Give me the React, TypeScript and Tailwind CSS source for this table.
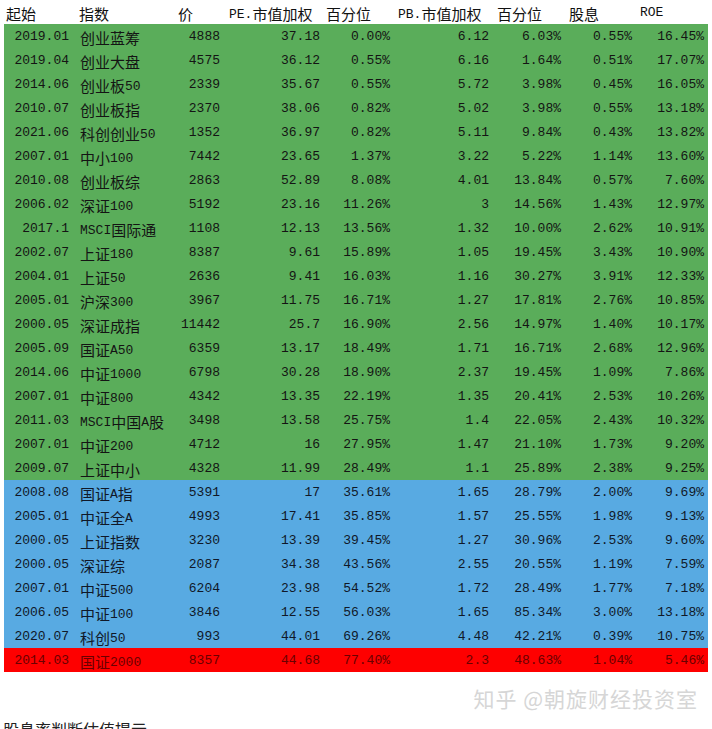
import React from "react";

type Row = { c: string[]; k: "g" | "b" | "r" };

const raw: [string, string][] = [
  ["2019.01|创业蓝筹|4888|37.18|0.00%|6.12|6.03%|0.55%|16.45%", "g"],
  ["2019.04|创业大盘|4575|36.12|0.55%|6.16|1.64%|0.51%|17.07%", "g"],
  ["2014.06|创业板50|2339|35.67|0.55%|5.72|3.98%|0.45%|16.05%", "g"],
  ["2010.07|创业板指|2370|38.06|0.82%|5.02|3.98%|0.55%|13.18%", "g"],
  ["2021.06|科创创业50|1352|36.97|0.82%|5.11|9.84%|0.43%|13.82%", "g"],
  ["2007.01|中小100|7442|23.65|1.37%|3.22|5.22%|1.14%|13.60%", "g"],
  ["2010.08|创业板综|2863|52.89|8.08%|4.01|13.84%|0.57%|7.60%", "g"],
  ["2006.02|深证100|5192|23.16|11.26%|3|14.56%|1.43%|12.97%", "g"],
  ["2017.1|MSCI国际通|1108|12.13|13.56%|1.32|10.00%|2.62%|10.91%", "g"],
  ["2002.07|上证180|8387|9.61|15.89%|1.05|19.45%|3.43%|10.90%", "g"],
  ["2004.01|上证50|2636|9.41|16.03%|1.16|30.27%|3.91%|12.33%", "g"],
  ["2005.01|沪深300|3967|11.75|16.71%|1.27|17.81%|2.76%|10.85%", "g"],
  ["2000.05|深证成指|11442|25.7|16.90%|2.56|14.97%|1.40%|10.17%", "g"],
  ["2005.09|国证A50|6359|13.17|18.49%|1.71|16.71%|2.68%|12.96%", "g"],
  ["2014.06|中证1000|6798|30.28|18.90%|2.37|19.45%|1.09%|7.86%", "g"],
  ["2007.01|中证800|4342|13.35|22.19%|1.35|20.41%|2.53%|10.26%", "g"],
  ["2011.03|MSCI中国A股|3498|13.58|25.75%|1.4|22.05%|2.43%|10.32%", "g"],
  ["2007.01|中证200|4712|16|27.95%|1.47|21.10%|1.73%|9.20%", "g"],
  ["2009.07|上证中小|4328|11.99|28.49%|1.1|25.89%|2.38%|9.25%", "g"],
  ["2008.08|国证A指|5391|17|35.61%|1.65|28.79%|2.00%|9.69%", "b"],
  ["2005.01|中证全A|4993|17.41|35.85%|1.57|25.55%|1.98%|9.13%", "b"],
  ["2000.05|上证指数|3230|13.39|39.45%|1.27|30.96%|2.53%|9.60%", "b"],
  ["2000.05|深证综|2087|34.38|43.56%|2.55|20.55%|1.19%|7.59%", "b"],
  ["2007.01|中证500|6204|23.98|54.52%|1.72|28.49%|1.77%|7.18%", "b"],
  ["2006.05|中证100|3846|12.55|56.03%|1.65|85.34%|3.00%|13.18%", "b"],
  ["2020.07|科创50|993|44.01|69.26%|4.48|42.21%|0.39%|10.75%", "b"],
  ["2014.03|国证2000|8357|44.68|77.40%|2.3|48.63%|1.04%|5.46%", "r"],
];

const rows: Row[] = raw.map(([s, k]) => ({ c: s.split("|"), k: k as Row["k"] }));

const headers = ["起始", "指数", "价", "PE.市值加权", "百分位", "PB.市值加权", "百分位", "股息", "ROE"];

const cellCls = [
  "text-right pr-[8px]",
  "text-left pl-[3px]",
  "text-right pr-[7px]",
  "text-right pr-[4px]",
  "text-right pr-[6px]",
  "text-right pr-[6px]",
  "text-right pr-[6px]",
  "text-right pr-[6px]",
  "text-right pr-[4px]",
];

function Mixed({ s }: { s: string }) {
  const parts = s.split(/([\u4e00-\u9fff]+)/).filter((p) => p.length > 0);
  return (
    <>
      {parts.map((p, i) =>
        /[\u4e00-\u9fff]/.test(p) ? (
          <span key={i} className="relative top-[2px] text-[15px] font-['Noto_Sans_CJK_SC',sans-serif]">
            {p}
          </span>
        ) : (
          <span key={i}>{p}</span>
        )
      )}
    </>
  );
}

const bg: Record<Row["k"], string> = {
  g: "bg-[#5aad5a] text-[#141414]",
  b: "bg-[#58aae2] text-[#101828]",
  r: "bg-[#fe0000] text-[#6a0000]",
};

export default function App() {
  return (
    <div className="relative w-[712px] h-[729px] overflow-hidden bg-white font-['Liberation_Mono','Noto_Sans_CJK_SC',monospace] text-[13px] leading-none">
      <div className="ml-[4px] w-[704px]">
        <div className="grid grid-cols-[73px_99px_51px_97px_72px_99px_72px_71px_70px] h-[24px] items-center text-[#111]">
          {headers.map((h, i) => (
            <div key={i} className="pl-[2px] whitespace-nowrap">
              <Mixed s={h} />
            </div>
          ))}
        </div>
        {rows.map((r, ri) => (
          <div
            key={ri}
            className={`grid grid-cols-[73px_99px_51px_97px_72px_99px_72px_71px_70px] h-[24px] items-center ${bg[r.k]}`}
          >
            {r.c.map((v, ci) => (
              <div key={ci} className={`whitespace-nowrap ${cellCls[ci]}`}>
                <Mixed s={v} />
              </div>
            ))}
          </div>
        ))}
      </div>
      <div className="flex justify-end pr-[14px] mt-[14px] h-[24px] items-center">
        <span className="text-[21px] text-[#d6d6d6] font-['Noto_Sans_CJK_SC',sans-serif] tracking-[1px]">
          知乎 @朝旋财经投资室
        </span>
      </div>
      <div className="mt-[11px] pl-[3px] text-[16px] text-[#222] font-['Noto_Sans_CJK_SC',sans-serif] leading-none">
        股息率判断估值提示
      </div>
    </div>
  );
}
